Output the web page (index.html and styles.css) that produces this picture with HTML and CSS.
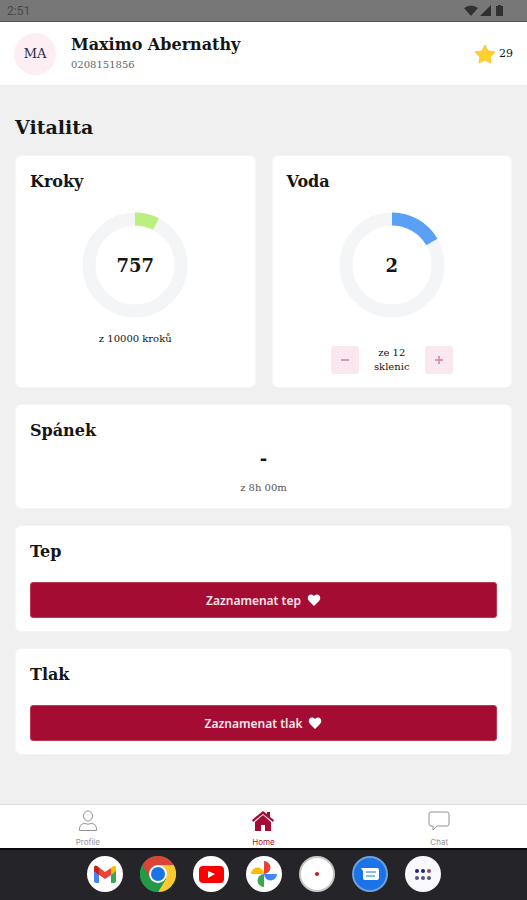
FILE: index.html
```html
<!DOCTYPE html>
<html lang="cs">
<head>
  <meta charset="UTF-8">
  <meta name="viewport" content="width=device-width, initial-scale=1">
  <title>Vitalita</title>
  <link rel="stylesheet" href="styles.css">
</head>
<body>
  <div class="status-bar">
    <span>2:51</span>
    <svg width="42" height="14" viewBox="0 0 42 14" fill="#303030" aria-hidden="true">
      <path d="M0 4Q7 -1 14 4L7 12Z"/>
      <path d="M27 1V12H16Z"/>
      <path d="M34 1h3v1h2v10h-7V2h2z"/>
    </svg>
  </div>

  <header class="header">
    <div class="avatar">MA</div>
    <div class="user">
      <div class="user-name">Maximo Abernathy</div>
      <div class="user-id">0208151856</div>
    </div>
    <div class="points">
      <svg width="22" height="20" viewBox="0 0 22 20" aria-hidden="true">
        <path d="M11 1l3 6 7 1-5 5 1 6-6-3-6 3 1-6-5-5 7-1z" fill="#fdd22f" stroke="#fdc52c" stroke-linejoin="round"/>
      </svg>
      <span>29</span>
    </div>
  </header>

  <main class="content">
    <h1>Vitalita</h1>

    <div class="row">
      <section class="card">
        <h2>Kroky</h2>
        <div class="ring">
          <svg viewBox="0 0 106 106" aria-hidden="true">
            <circle class="track" cx="53" cy="53" r="46"/>
            <circle class="bar steps" cx="53" cy="53" r="46" pathLength="100" stroke-dasharray="7.57 100"/>
          </svg>
          <span class="ring-value">757</span>
        </div>
        <p class="goal">z 10000 kroků</p>
      </section>

      <section class="card">
        <h2>Voda</h2>
        <div class="ring">
          <svg viewBox="0 0 106 106" aria-hidden="true">
            <circle class="track" cx="53" cy="53" r="46"/>
            <circle class="bar water" cx="53" cy="53" r="46" pathLength="100" stroke-dasharray="16.67 100"/>
          </svg>
          <span class="ring-value">2</span>
        </div>
        <div class="counter">
          <button type="button" aria-label="Ubrat sklenici">
            <svg width="10" height="10" viewBox="0 0 10 10"><path d="M1 5h8"/></svg>
          </button>
          <p>ze 12 sklenic</p>
          <button type="button" aria-label="Přidat sklenici">
            <svg width="10" height="10" viewBox="0 0 10 10"><path d="M1 5h8M5 1v8"/></svg>
          </button>
        </div>
      </section>
    </div>

    <section class="card">
      <h2>Spánek</h2>
      <div class="sleep-value">-</div>
      <p class="sleep-goal">z 8h 00m</p>
    </section>

    <section class="card">
      <h2>Tep</h2>
      <button type="button" class="record">
        Zaznamenat tep
        <svg width="14" height="12" viewBox="0 0 14 12" aria-hidden="true"><path d="M7 12L2 7Q0 5 1 2.500Q2 0 4.500 .5Q6 .8 7 2Q8 .8 9.500 .5Q12 0 13 2.500Q14 5 12 7Z"/></svg>
      </button>
    </section>

    <section class="card">
      <h2>Tlak</h2>
      <button type="button" class="record">
        Zaznamenat tlak
        <svg width="14" height="12" viewBox="0 0 14 12" aria-hidden="true"><path d="M7 12L2 7Q0 5 1 2.500Q2 0 4.500 .5Q6 .8 7 2Q8 .8 9.500 .5Q12 0 13 2.500Q14 5 12 7Z"/></svg>
      </button>
    </section>
  </main>

  <nav class="tabs">
    <a href="#profile">
      <svg width="20" height="22" viewBox="0 0 20 22" fill="none" stroke="#929292" aria-hidden="true">
        <ellipse cx="10" cy="6" rx="4.500" ry="5"/>
        <path d="M1.500 20.500Q1 13.500 7 13.500Q10 15 13 13.500Q19 13.500 18.500 20.500Z" stroke-linejoin="round"/>
      </svg>
      Profile
    </a>
    <a href="#home" class="active">
      <svg width="22" height="22" viewBox="0 0 22 22" fill="#a50c34" aria-hidden="true">
        <path d="M0 10L11 1l4 3V2h3v5l4 3-1 2L11 4 1 12z"/>
        <path d="M3 12l8-7 8 7v9h-6v-6H9v6H3z"/>
      </svg>
      Home
    </a>
    <a href="#chat">
      <svg width="22" height="22" viewBox="0 0 22 22" fill="none" stroke="#929292" aria-hidden="true">
        <path d="M3 2h16q2 0 2 2v10q0 2-2 2H9l-4 4v-4H3q-2 0-2-2V4q0-2 2-2z" stroke-linejoin="round"/>
      </svg>
      Chat
    </a>
  </nav>

  <footer class="dock">
    <a href="#gmail" aria-label="Gmail">
      <svg viewBox="0 0 36 36">
        <circle cx="18" cy="18" r="18" fill="#fff"/>
        <path d="M7 12v13q0 2 2 2h3V16z" fill="#4285f4"/>
        <path d="M29 12v13q0 2-2 2h-3V16z" fill="#34a853"/>
        <path d="M24 12l2-2q3-1 3 2v3l-5 4z" fill="#fbbc04"/>
        <path d="M7 15v-3q0-3 3-2l8 6 6-4v7l-6 4-6-4z" fill="#ea4335"/>
        <path d="M7 15v-3q0-3 3-2l2 2v7z" fill="#c5221f"/>
      </svg>
    </a>
    <a href="#chrome" aria-label="Chrome">
      <svg viewBox="0 0 36 36">
        <circle cx="18" cy="18" r="18" fill="#229a49"/>
        <path d="M18 18L2.400 9A18 18 0 0 1 33.600 9z" fill="#db4437"/>
        <path d="M18 9h15.600A18 18 0 0 1 18 36l8-13z" fill="#fdc92f"/>
        <path d="M2.400 9l8 14L18 18V9z" fill="#db4437"/>
        <path d="M2.400 9A18 18 0 0 0 18 36l8-14-8 4-8-4z" fill="#229a49"/>
        <circle cx="18" cy="18" r="9" fill="#fff"/>
        <circle cx="18" cy="18" r="7" fill="#1a73e8"/>
      </svg>
    </a>
    <a href="#youtube" aria-label="YouTube">
      <svg viewBox="0 0 36 36">
        <circle cx="18" cy="18" r="18" fill="#fff"/>
        <rect x="6" y="10" width="25" height="17" rx="4" fill="#f00"/>
        <path d="M15 15l7 3-7 4z" fill="#fff"/>
      </svg>
    </a>
    <a href="#photos" aria-label="Fotky">
      <svg viewBox="0 0 36 36">
        <circle cx="18" cy="18" r="18" fill="#fff"/>
        <path d="M18 18V5a6.500 6.500 0 0 1 0 13z" fill="#ea4335"/>
        <path d="M18 18h13a6.500 6.500 0 0 1-13 0z" fill="#4285f4"/>
        <path d="M18 18v13a6.500 6.500 0 0 1 0-13z" fill="#34a853"/>
        <path d="M18 18H5a6.500 6.500 0 0 1 13 0z" fill="#fbbc04"/>
      </svg>
    </a>
    <a href="#recorder" aria-label="Záznam">
      <svg viewBox="0 0 36 36">
        <circle cx="18" cy="18" r="17" fill="#fff" stroke="#c8c8c8" stroke-width="2"/>
        <circle cx="18" cy="18" r="2" fill="#c4161c"/>
      </svg>
    </a>
    <a href="#messages" aria-label="Zprávy">
      <svg viewBox="0 0 36 36">
        <circle cx="18" cy="18" r="17" fill="#1a73e8" stroke="#6d9fd9" stroke-width="2"/>
        <path d="M9 12h16q2 0 2 2v8q0 2-2 2H13q-2 0-2-2v-7z" fill="#fff"/>
        <path d="M14 16h10M14 20h9" stroke="#1a73e8"/>
      </svg>
    </a>
    <a href="#apps" aria-label="Aplikace">
      <svg viewBox="0 0 36 36">
        <circle cx="18" cy="18" r="18" fill="#f8f8fd"/>
        <g fill="#22228a">
          <circle cx="12" cy="15" r="2"/><circle cx="18" cy="15" r="2"/>
        </g>
        <circle cx="24" cy="15" r="2" fill="#8a4a6c"/>
        <g fill="#55557c">
          <circle cx="12" cy="22" r="2"/><circle cx="18" cy="22" r="2"/><circle cx="24" cy="22" r="2"/>
        </g>
      </svg>
    </a>
  </footer>
</body>
</html>
```
FILE: styles.css
```css
* {
  box-sizing: border-box;
}
body {
  margin: 0;
  min-height: 100vh;
  display: flex;
  flex-direction: column;
  background: #f0f0f0;
  color: #151515;
  font-family: "Roboto Slab", "DejaVu Serif", serif;
}
h1, h2, p {
  margin: 0;
}
a {
  text-decoration: none;
}
.status-bar {
  height: 22px;
  padding: 0 21px 0 7px;
  display: flex;
  align-items: center;
  justify-content: space-between;
  background: #777;
  border-bottom: 1px solid #555;
  color: #484848;
  font-family: Roboto, sans-serif;
  font-size: 12px;
}
.header {
  display: flex;
  align-items: center;
  height: 63px;
  padding: 0 14px;
  background: #fff;
}
.avatar {
  width: 42px;
  height: 42px;
  border-radius: 50%;
  background: #fdeef4;
  display: flex;
  align-items: center;
  justify-content: center;
  font-size: 13px;
  color: #2a2a3a;
}
.user {
  flex: 1;
  padding-left: 15px;
}
.user-name {
  font-size: 16px;
  line-height: 22px;
  font-weight: bold;
}
.user-id {
  font-size: 10px;
  line-height: 18px;
  color: #666;
}
.points {
  display: flex;
  align-items: center;
  gap: 3px;
  font-size: 11px;
}
.content {
  flex: 1;
  display: flex;
  flex-direction: column;
  gap: 16px;
  padding: 28px 15px;
}
h1 {
  font-size: 19px;
  line-height: 28px;
  margin-bottom: -2px;
}
h2 {
  font-size: 16px;
  line-height: 24px;
}
.row {
  display: grid;
  grid-template-columns: 1fr 1fr;
  gap: 16px;
}
.card {
  padding: 14px 14px 13px;
  background: #fff;
  border: 1px solid #f5f5f5;
  border-radius: 6px;
}
.ring {
  display: grid;
  place-items: center;
  margin: 18px auto 14px;
  width: 106px;
}
.ring svg, .ring-value {
  grid-area: 1 / 1;
}
.ring svg {
  width: 100%;
  transform: rotate(-90deg);
}
.ring circle {
  fill: none;
  stroke-width: 13;
}
.track {
  stroke: #f3f5f6;
}
.steps {
  stroke: #bcef7d;
}
.water {
  stroke: #5aa0f6;
}
.ring-value {
  font-size: 18px;
  font-weight: bold;
}
.goal, .sleep-goal {
  text-align: center;
  font-size: 10px;
  line-height: 14px;
}
.sleep-goal {
  margin-top: 6px;
  color: #555;
}
.counter {
  display: flex;
  justify-content: center;
  align-items: center;
  gap: 14px;
  padding-top: 14px;
}
.counter p {
  width: 38px;
  text-align: center;
  font-size: 10px;
  line-height: 14px;
}
.counter button {
  width: 28px;
  height: 28px;
  padding: 0;
  display: grid;
  place-items: center;
  border: 0;
  border-radius: 3px;
  background: #fae7f0;
}
.counter path {
  stroke: #d59ab2;
  stroke-width: 2;
}
.sleep-value {
  text-align: center;
  font-size: 18px;
  font-weight: bold;
  line-height: 32px;
}
.record {
  display: flex;
  align-items: center;
  justify-content: center;
  gap: 6px;
  width: 100%;
  height: 36px;
  margin-top: 18px;
  border: 1px solid #b93a4c;
  border-radius: 3px;
  background: #a50c34;
  color: #fbe6ea;
  font-family: "Noto Sans", sans-serif;
  font-size: 12px;
  font-weight: 600;
}
.record svg {
  fill: #fff;
}
.tabs {
  display: grid;
  grid-template-columns: repeat(3, 1fr);
  height: 44px;
  background: #fff;
  border-top: 1px solid #ddd;
}
.tabs a {
  display: flex;
  flex-direction: column;
  align-items: center;
  gap: 5px;
  padding-top: 5px;
  color: #929292;
  font-family: Inter, sans-serif;
  font-size: 8px;
  line-height: 10px;
}
.tabs .active {
  color: #a50c34;
}
.dock {
  display: flex;
  align-items: center;
  justify-content: center;
  gap: 17px;
  height: 52px;
  padding-bottom: 2px;
  background: #242429;
  border-top: 2px solid #0a0a0c;
}
.dock a, .dock svg {
  display: block;
  width: 36px;
  height: 36px;
}
```
